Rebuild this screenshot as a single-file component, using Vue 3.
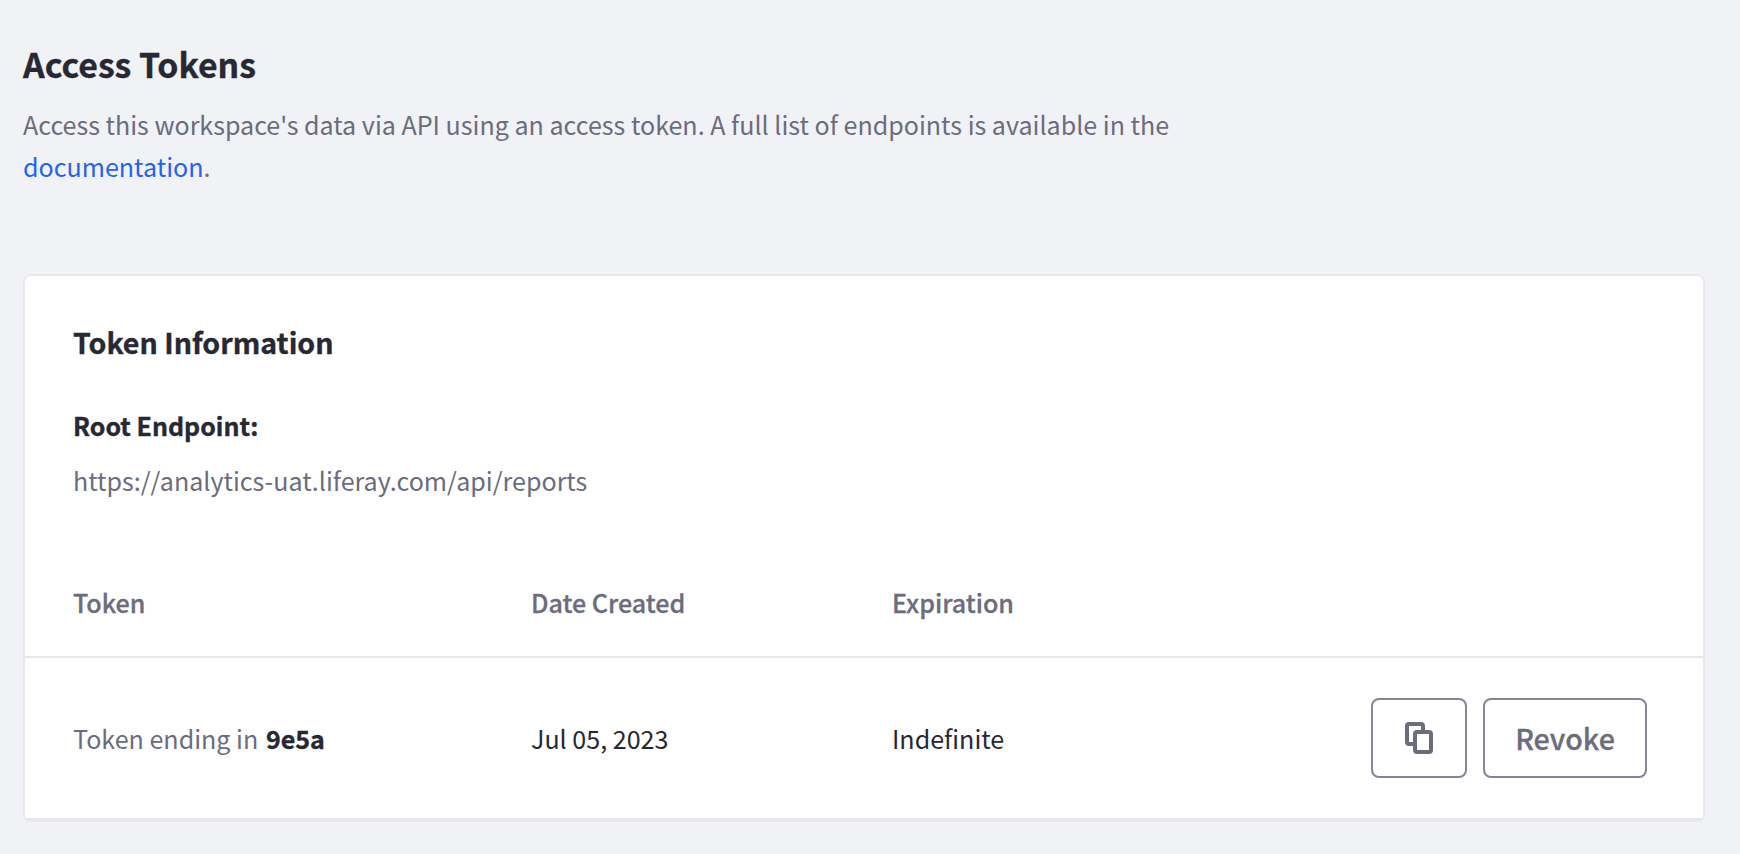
<script setup>
const columns = ['Token', 'Date Created', 'Expiration']
</script>

<template>
  <main class="page">
    <h1 class="title">Access Tokens</h1>
    <p class="intro">
      Access this workspace's data via API using an access token. A full list of endpoints is available in the
      <a class="link">documentation</a>.
    </p>
    <section class="card">
      <div class="info">
        <h2 class="heading">Token Information</h2>
        <h3 class="label">Root Endpoint:</h3>
        <p class="url">https://analytics-uat.liferay.com/api/reports</p>
      </div>
      <div class="row head">
        <span v-for="c in columns" :key="c">{{ c }}</span>
      </div>
      <div class="row body">
        <span class="cell muted">Token ending in <b>9e5a</b></span>
        <span class="cell">Jul 05, 2023</span>
        <span class="cell">Indefinite</span>
        <div class="actions">
          <button class="btn copy" aria-label="Copy">
            <svg width="28" height="32" viewBox="0 0 28 32" fill="none" stroke="currentColor" stroke-width="4">
              <path d="M8 22H4a2 2 0 0 1-2-2V4a2 2 0 0 1 2-2h12a2 2 0 0 1 2 2v4" />
              <rect x="10" y="10" width="16" height="20" rx="2" />
            </svg>
          </button>
          <button class="btn revoke">Revoke</button>
        </div>
      </div>
    </section>
  </main>
</template>

<style>
body { margin: 0; background: #f1f2f5; }
</style>

<style scoped>
.page {
  box-sizing: border-box;
  height: 854px;
  padding: 38px 35px 0 23px;
  background: #f1f2f5;
  color: #272833;
  font-family: "Noto Sans CJK JP", "Noto Sans CJK SC", sans-serif;
  font-size: 25.07px;
}
h1, h2, h3, p { margin: 0; }
.title, .heading, .label, .muted b { font-weight: 700; -webkit-text-stroke: 0.35px currentColor; }
.title { font-size: 33.8px; line-height: 52px; }
.intro { width: 1180px; margin-top: 13px; line-height: 42px; color: #6b6c7e; }
.link { color: #2163f6; }
.card {
  margin-top: 87px;
  box-sizing: border-box;
  height: 548px;
  border: 2px solid #e7e7ed;
  border-bottom-width: 4px;
  border-radius: 8px;
  background: #fff;
}
.info { height: 276px; padding: 46px 48px 0; box-sizing: border-box; }
.heading { font-size: 28.6px; line-height: 40px; }
.label { margin-top: 42px; line-height: 42px; font-size: 25px; }
.url { margin-top: 13px; line-height: 42px; color: #6b6c7e; }
.row {
  display: grid;
  grid-template-columns: 458px 361px 1fr auto;
  align-items: center;
  padding: 0 56px 0 48px;
}
.head {
  height: 106px;
  box-sizing: border-box;
  padding-bottom: 4px;
  border-bottom: 2px solid #e7e7ed;
  color: #6b6c7e;
  font-weight: 500;
  -webkit-text-stroke: 0.3px currentColor;
}
.body { height: 160px; background: #fff; }
.cell { padding-bottom: 1px; }
.muted { color: #6b6c7e; }
.muted b { margin-left: 2px; color: #272833; }
.actions { display: flex; gap: 16px; }
.btn {
  display: flex;
  align-items: center;
  justify-content: center;
  box-sizing: border-box;
  height: 80px;
  padding: 0;
  border: 2px solid #868496;
  border-radius: 8px;
  background: #fff;
  color: #6b6c7e;
  font: 500 28.64px "Noto Sans CJK JP", "Noto Sans CJK SC", sans-serif;
}
.copy { width: 96px; }
.revoke { width: 164px; padding-bottom: 2px; -webkit-text-stroke: 0.3px currentColor; }
</style>
